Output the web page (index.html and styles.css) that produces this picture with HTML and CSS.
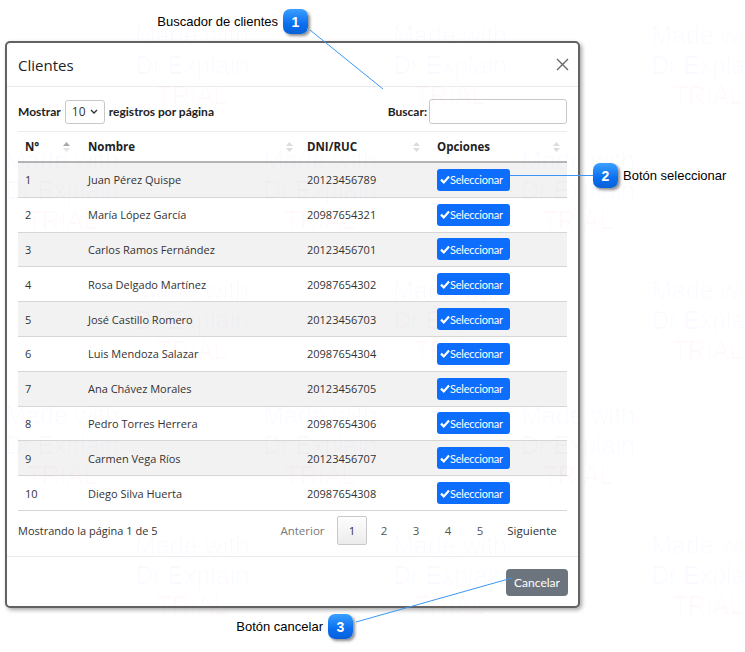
FILE: index.html
```html
<!DOCTYPE html>
<html lang="es">
<head>
<meta charset="utf-8">
<title>Clientes</title>
<link rel="stylesheet" href="styles.css">
</head>
<body>
<div class="page">
  <div class="modal">
    <div class="modal-header">
      <h5 class="modal-title">Clientes</h5>
      <span class="close"><svg width="13" height="13" viewBox="0 0 13 13"><path d="M1 1L12 12M12 1L1 12" stroke="#666" stroke-width="1.3" fill="none"/></svg></span>
    </div>
    <div class="modal-body">
      <div class="dt-controls">
        <div class="dt-length">
          <span class="lbl">Mostrar</span>
          <div class="select"><span>10</span><svg width="8" height="5" viewBox="0 0 8 5"><path d="M1 1L4 4L7 1" stroke="#333" stroke-width="1.4" fill="none"/></svg></div>
          <span class="lbl">registros por página</span>
        </div>
        <div class="dt-filter">
          <span class="lbl">Buscar:</span>
          <div class="input"></div>
        </div>
      </div>
      <div class="dt-table">
        <div class="thead">
          <div class="th">N°<svg class="sort" width="7" height="12" viewBox="0 0 7 12"><path d="M3.5 1L7 5H0Z" fill="#a8a8a8"/><path d="M0 7H7L3.5 11Z" fill="#e4e4e4"/></svg></div>
          <div class="th">Nombre<svg class="sort" width="7" height="12" viewBox="0 0 7 12"><path d="M3.5 1L7 5H0Z" fill="#dcdcdc"/><path d="M0 7H7L3.5 11Z" fill="#dcdcdc"/></svg></div>
          <div class="th">DNI/RUC<svg class="sort" width="7" height="12" viewBox="0 0 7 12"><path d="M3.5 1L7 5H0Z" fill="#dcdcdc"/><path d="M0 7H7L3.5 11Z" fill="#dcdcdc"/></svg></div>
          <div class="th">Opciones<svg class="sort" width="7" height="12" viewBox="0 0 7 12"><path d="M3.5 1L7 5H0Z" fill="#dcdcdc"/><path d="M0 7H7L3.5 11Z" fill="#dcdcdc"/></svg></div>
        </div>
        <div class="tr odd"><div class="td">1</div><div class="td">Juan Pérez Quispe</div><div class="td">20123456789</div><div class="td"><button class="btn-sel"><svg width="10" height="9" viewBox="0 0 10 9"><path d="M1 4.6L3.8 7.4L9 1.6" stroke="#fff" stroke-width="2.2" fill="none"/></svg>Seleccionar</button></div></div>
        <div class="tr"><div class="td">2</div><div class="td">María López García</div><div class="td">20987654321</div><div class="td"><button class="btn-sel"><svg width="10" height="9" viewBox="0 0 10 9"><path d="M1 4.6L3.8 7.4L9 1.6" stroke="#fff" stroke-width="2.2" fill="none"/></svg>Seleccionar</button></div></div>
        <div class="tr odd"><div class="td">3</div><div class="td">Carlos Ramos Fernández</div><div class="td">20123456701</div><div class="td"><button class="btn-sel"><svg width="10" height="9" viewBox="0 0 10 9"><path d="M1 4.6L3.8 7.4L9 1.6" stroke="#fff" stroke-width="2.2" fill="none"/></svg>Seleccionar</button></div></div>
        <div class="tr"><div class="td">4</div><div class="td">Rosa Delgado Martínez</div><div class="td">20987654302</div><div class="td"><button class="btn-sel"><svg width="10" height="9" viewBox="0 0 10 9"><path d="M1 4.6L3.8 7.4L9 1.6" stroke="#fff" stroke-width="2.2" fill="none"/></svg>Seleccionar</button></div></div>
        <div class="tr odd"><div class="td">5</div><div class="td">José Castillo Romero</div><div class="td">20123456703</div><div class="td"><button class="btn-sel"><svg width="10" height="9" viewBox="0 0 10 9"><path d="M1 4.6L3.8 7.4L9 1.6" stroke="#fff" stroke-width="2.2" fill="none"/></svg>Seleccionar</button></div></div>
        <div class="tr"><div class="td">6</div><div class="td">Luis Mendoza Salazar</div><div class="td">20987654304</div><div class="td"><button class="btn-sel"><svg width="10" height="9" viewBox="0 0 10 9"><path d="M1 4.6L3.8 7.4L9 1.6" stroke="#fff" stroke-width="2.2" fill="none"/></svg>Seleccionar</button></div></div>
        <div class="tr odd"><div class="td">7</div><div class="td">Ana Chávez Morales</div><div class="td">20123456705</div><div class="td"><button class="btn-sel"><svg width="10" height="9" viewBox="0 0 10 9"><path d="M1 4.6L3.8 7.4L9 1.6" stroke="#fff" stroke-width="2.2" fill="none"/></svg>Seleccionar</button></div></div>
        <div class="tr"><div class="td">8</div><div class="td">Pedro Torres Herrera</div><div class="td">20987654306</div><div class="td"><button class="btn-sel"><svg width="10" height="9" viewBox="0 0 10 9"><path d="M1 4.6L3.8 7.4L9 1.6" stroke="#fff" stroke-width="2.2" fill="none"/></svg>Seleccionar</button></div></div>
        <div class="tr odd"><div class="td">9</div><div class="td">Carmen Vega Ríos</div><div class="td">20123456707</div><div class="td"><button class="btn-sel"><svg width="10" height="9" viewBox="0 0 10 9"><path d="M1 4.6L3.8 7.4L9 1.6" stroke="#fff" stroke-width="2.2" fill="none"/></svg>Seleccionar</button></div></div>
        <div class="tr"><div class="td">10</div><div class="td">Diego Silva Huerta</div><div class="td">20987654308</div><div class="td"><button class="btn-sel"><svg width="10" height="9" viewBox="0 0 10 9"><path d="M1 4.6L3.8 7.4L9 1.6" stroke="#fff" stroke-width="2.2" fill="none"/></svg>Seleccionar</button></div></div>
      </div>
      <div class="dt-bottom">
        <div class="dt-info">Mostrando la página 1 de 5</div>
        <div class="paginate">
          <span class="pg pg-prev">Anterior</span>
          <span class="pg pg-num current">1</span>
          <span class="pg pg-num">2</span>
          <span class="pg pg-num">3</span>
          <span class="pg pg-num">4</span>
          <span class="pg pg-num">5</span>
          <span class="pg pg-next">Siguiente</span>
        </div>
      </div>
    </div>
    <div class="modal-footer">
      <button class="btn-cancel">Cancelar</button>
    </div>
  </div>

  <div class="wm wm-a1">Made with<br>Dr.Explain<br><span class="t">TRIAL</span></div>
  <div class="wm wm-a2">Made with<br>Dr.Explain<br><span class="t">TRIAL</span></div>
  <div class="wm wm-a3">Made with<br>Dr.Explain<br><span class="t">TRIAL</span></div>
  <div class="wm wm-b1">Made with<br>Dr.Explain<br><span class="t">TRIAL</span></div>
  <div class="wm wm-b2">Made with<br>Dr.Explain<br><span class="t">TRIAL</span></div>
  <div class="wm wm-b3">Made with<br>Dr.Explain<br><span class="t">TRIAL</span></div>
  <div class="wm wm-c1">Made with<br>Dr.Explain<br><span class="t">TRIAL</span></div>
  <div class="wm wm-c2">Made with<br>Dr.Explain<br><span class="t">TRIAL</span></div>
  <div class="wm wm-c3">Made with<br>Dr.Explain<br><span class="t">TRIAL</span></div>
  <div class="wm wm-d1">Made with<br>Dr.Explain<br><span class="t">TRIAL</span></div>
  <div class="wm wm-d2">Made with<br>Dr.Explain<br><span class="t">TRIAL</span></div>
  <div class="wm wm-d3">Made with<br>Dr.Explain<br><span class="t">TRIAL</span></div>
  <div class="wm wm-e1">Made with<br>Dr.Explain<br><span class="t">TRIAL</span></div>
  <div class="wm wm-e2">Made with<br>Dr.Explain<br><span class="t">TRIAL</span></div>
  <div class="wm wm-e3">Made with<br>Dr.Explain<br><span class="t">TRIAL</span></div>

  <svg class="leaders" width="745" height="652" viewBox="0 0 745 652">
    <path d="M310 30L383 89" stroke="#3b97f5" stroke-width="1" fill="none"/>
    <path d="M510 175.5H593" stroke="#3b97f5" stroke-width="1" fill="none"/>
    <path d="M356 622L512 578" stroke="#3b97f5" stroke-width="1" fill="none"/>
  </svg>

  <div class="callout co1"><span class="co-text">Buscador de clientes</span><span class="badge">1</span></div>
  <div class="callout co2"><span class="badge">2</span><span class="co-text">Botón seleccionar</span></div>
  <div class="callout co3"><span class="co-text">Botón cancelar</span><span class="badge">3</span></div>
</div>
</body>
</html>
```

FILE: styles.css
```css
* { box-sizing: border-box; }
html, body { margin: 0; padding: 0; background: #fff; }
body { font-family: "Open Sans", "Noto Sans", sans-serif; color: #212529; }

.page {
  position: relative;
  width: 745px;
  height: 652px;
  overflow: hidden;
  padding: 41px 0 0 5px;
}

.modal {
  width: 575px;
  height: 567px;
  border: 2px solid #626262;
  border-radius: 5px;
  background: #fff;
  box-shadow: 2px 2px 4px rgba(0,0,0,0.35);
  display: flex;
  flex-direction: column;
}

.modal-header {
  height: 44px;
  padding: 0 9px 0 11px;
  display: flex;
  align-items: center;
  justify-content: space-between;
  border-bottom: 1px solid #e9ecef;
  flex: none;
}
.modal-title {
  margin: 0;
  font-size: 15px;
  font-weight: 500;
  color: #212529;
}
.close { display: flex; }

.modal-body {
  padding: 12px 11px 11px 11px;
  flex: none;
}

.dt-controls {
  display: flex;
  justify-content: space-between;
  align-items: center;
  height: 25px;
  margin-bottom: 7px;
}
.dt-length, .dt-filter {
  display: flex;
  align-items: center;
  gap: 4px;
}
.dt-filter { gap: 2px; }
.lbl {
  font-family: "Lato", sans-serif;
  font-weight: 700;
  font-size: 12px;
  color: #222;
}
.select {
  width: 40px;
  height: 24px;
  border: 1px solid #c8c8c8;
  border-radius: 3px;
  display: flex;
  align-items: center;
  justify-content: space-between;
  padding: 0 6px 0 6px;
  font-size: 12px;
  color: #333;
}
.input {
  width: 138px;
  height: 25px;
  border: 1px solid #c8c8c8;
  border-radius: 3px;
}

.dt-table {
  border-top: 1px solid #ececec;
}
.thead, .tr {
  display: grid;
  grid-template-columns: 63px 219px 130px 137px;
}
.thead {
  height: 31px;
  border-bottom: 2px solid #b4b4b4;
}
.th {
  display: flex;
  align-items: center;
  justify-content: space-between;
  padding: 0 7px 0 7px;
  font-size: 11.5px;
  font-weight: 700;
  color: #222;
}
.th:first-child { padding-right: 11px; }
.th:nth-child(3) { padding-right: 10px; }
.sort { flex: none; }

.tr {
  height: 34.8px;
  border-bottom: 1px solid #d6d6d6;
}
.tr.odd { background: #f2f2f2; }
.td {
  display: flex;
  align-items: center;
  padding: 0 7px;
  font-size: 11px;
  color: #333;
}

.btn-sel {
  width: 73px;
  height: 22px;
  border: none;
  border-radius: 3px;
  background: #0d6efd;
  color: #fff;
  font-family: "Lato", sans-serif;
  font-size: 11px;
  letter-spacing: -0.2px;
  padding: 0 0 0 3px;
  display: flex;
  align-items: center;
  gap: 0;
}

.dt-bottom {
  display: flex;
  justify-content: space-between;
  align-items: center;
  padding-top: 5px;
  height: 34px;
}
.dt-info {
  font-size: 11px;
  color: #333;
}
.paginate {
  display: flex;
  align-items: center;
  gap: 2px;
}
.pg {
  height: 29px;
  display: flex;
  align-items: center;
  justify-content: center;
  font-size: 11.5px;
  color: #555;
  border: 1px solid transparent;
  border-radius: 2px;
}
.pg-prev { width: 65px; color: #777; }
.pg-num { width: 30px; }
.pg-next { width: 70px; color: #333; }
.pg.current {
  border-color: #c9c9c9;
  background: linear-gradient(#fdfdfd, #ececec);
  color: #333;
}

.modal-footer {
  border-top: 1px solid #e9ecef;
  flex: 1;
  display: flex;
  justify-content: flex-end;
  align-items: flex-start;
  padding: 12px 10px 0 0;
}
.btn-cancel {
  width: 62px;
  height: 27px;
  border: none;
  border-radius: 4px;
  background: #6c757d;
  color: #fff;
  font-family: "Lato", sans-serif;
  font-size: 12px;
  padding: 0;
}

/* watermark */
.wm {
  position: absolute;
  width: 160px;
  margin-left: -80px;
  text-align: center;
  font-family: "Liberation Sans", Arial, sans-serif;
  font-size: 25px;
  line-height: 30px;
  color: rgba(110, 90, 255, 0.028);
  pointer-events: none;
}
.wm .t { color: rgba(255, 80, 120, 0.028); }
.wm-a1 { left: 192px; top: 20px; }
.wm-a2 { left: 450px; top: 20px; }
.wm-a3 { left: 708px; top: 20px; }
.wm-b1 { left: 62px; top: 145px; }
.wm-b2 { left: 320px; top: 145px; }
.wm-b3 { left: 578px; top: 145px; }
.wm-c1 { left: 192px; top: 275px; }
.wm-c2 { left: 450px; top: 275px; }
.wm-c3 { left: 708px; top: 275px; }
.wm-d1 { left: 62px; top: 400px; }
.wm-d2 { left: 320px; top: 400px; }
.wm-d3 { left: 578px; top: 400px; }
.wm-e1 { left: 192px; top: 530px; }
.wm-e2 { left: 450px; top: 530px; }
.wm-e3 { left: 708px; top: 530px; }

/* annotations */
.leaders {
  position: absolute;
  left: 0;
  top: 0;
  pointer-events: none;
}
.callout {
  position: absolute;
  display: flex;
  align-items: center;
  gap: 5px;
  font-family: "Liberation Sans", Arial, sans-serif;
  font-size: 13px;
  color: #000;
}
.badge {
  width: 25px;
  height: 25px;
  border-radius: 7px;
  background: linear-gradient(#3aa0ff, #0a6ff0 60%, #0860d8);
  color: #fff;
  font-weight: 700;
  font-size: 14px;
  display: flex;
  align-items: center;
  justify-content: center;
  box-shadow: 2px 2px 3px rgba(0,0,0,0.45);
}
.co1 { right: 437px; top: 9px; }
.co2 { left: 593px; top: 163px; }
.co3 { right: 392px; top: 614px; }
```
